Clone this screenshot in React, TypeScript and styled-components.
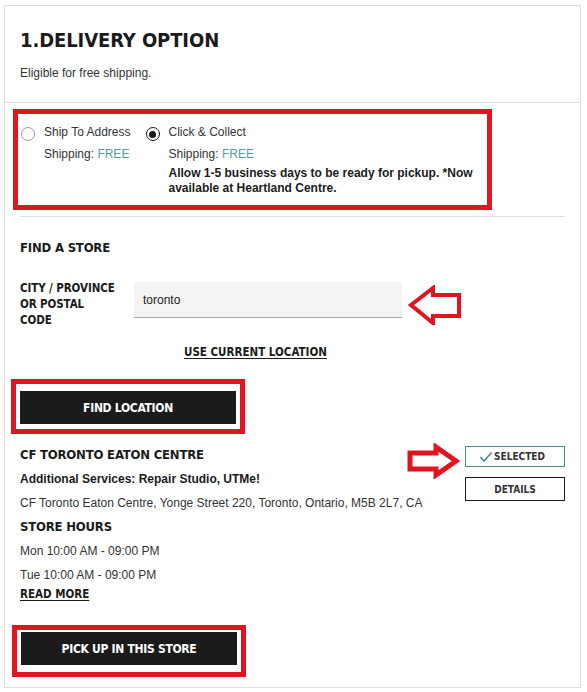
import styled, { createGlobalStyle } from "styled-components";

const GlobalStyle = createGlobalStyle`
  body {
    margin: 0;
    background: #fff;
    font-family: "Liberation Sans", Arial, sans-serif;
    color: #1b1b1b;
  }
`;

const COND = `"DejaVu Sans Condensed", "Liberation Sans Narrow", Roboto, sans-serif`;
const RED = "#e1141f";
const TEAL = "#5a9aa2";

const Card = styled.div`
  box-sizing: border-box;
  width: 577px;
  margin: 5px 0 0 4px;
  border: 1px solid #dedede;
`;

const Header = styled.div`
  padding: 22px 15px 21px;
  border-bottom: 1px solid #dedede;
`;

const Title = styled.h1`
  margin: 0;
  font-family: ${COND};
  font-size: 20px;
  line-height: 24px;
  font-weight: 700;
  letter-spacing: -0.1px;
  color: #1b1b1b;
`;

const Note = styled.p`
  margin: 13px 0 0;
  font-size: 12px;
  line-height: 16px;
  color: #333;
`;

const Body = styled.div`
  padding: 6px 15px 10px;
`;

const Highlight = styled.div<{ $shift: number; $pad: string; $width?: number }>`
  box-sizing: border-box;
  border: 5px solid ${RED};
  margin-left: -${(p) => p.$shift}px;
  padding: ${(p) => p.$pad};
  width: ${(p) => (p.$width ? `${p.$width}px` : "auto")};
`;

const Options = styled.div`
  display: flex;
  gap: 15px;
`;

const Option = styled.label`
  display: grid;
  grid-template-columns: 14px auto;
  column-gap: 9px;
  align-items: start;
  flex: none;
`;

const Radio = styled.span<{ $checked?: boolean }>`
  box-sizing: border-box;
  width: 14px;
  height: 14px;
  margin-top: 3px;
  border-radius: 50%;
  border: ${(p) => (p.$checked ? "1.5px solid #1b1b1b" : "1px solid #9a9a9a")};
  display: flex;
  align-items: center;
  justify-content: center;
  &::after {
    content: "";
    display: ${(p) => (p.$checked ? "block" : "none")};
    width: 7px;
    height: 7px;
    border-radius: 50%;
    background: #1b1b1b;
  }
`;

const OptionText = styled.div`
  font-size: 12px;
  color: #333;
`;

const OptionName = styled.div`
  line-height: 16px;
  white-space: nowrap;
`;

const Shipping = styled.div`
  margin-top: 6px;
  line-height: 16px;
  white-space: nowrap;
  span {
    color: ${TEAL};
  }
`;

const Allow = styled.p`
  margin: 4px 0 0;
  width: 318px;
  line-height: 15px;
  font-weight: 700;
  color: #1b1b1b;
`;

const Divider = styled.hr`
  margin: 6px 0 0;
  border: 0;
  border-top: 1px solid #dedede;
`;

const SectionTitle = styled.h2`
  margin: 22px 0 0;
  font-family: ${COND};
  font-size: 13px;
  line-height: 18px;
  font-weight: 700;
  letter-spacing: -0.2px;
`;

const FormRow = styled.div`
  margin-top: 23px;
  display: flex;
  align-items: flex-start;
`;

const FieldLabel = styled.label`
  width: 114px;
  white-space: nowrap;
  font-family: ${COND};
  font-size: 11.5px;
  line-height: 16px;
  font-weight: 700;
  letter-spacing: -0.1px;
`;

const Input = styled.input`
  box-sizing: border-box;
  width: 268px;
  height: 36px;
  margin-top: 2px;
  padding: 0 9px;
  border: 0;
  border-bottom: 1px solid #a9a9a9;
  background: #f4f4f4;
  font-family: "Liberation Sans", Arial, sans-serif;
  font-size: 12px;
  color: #1b1b1b;
  outline: none;
`;

const ArrowLeft = styled.svg`
  margin: 5px 0 0 6px;
`;

const LinkRow = styled.div`
  margin-top: 15px;
  padding-left: 164px;
  line-height: 16px;
`;

const TextLink = styled.a`
  font-family: ${COND};
  font-size: 11.5px;
  line-height: 16px;
  font-weight: 700;
  color: #1b1b1b;
  text-decoration: underline;
  text-underline-offset: 2px;
`;

const BlackButton = styled.button`
  display: block;
  width: 216px;
  height: 33px;
  border: 0;
  background: #1b1b1b;
  color: #fff;
  font-family: ${COND};
  font-size: 12px;
  font-weight: 700;
  letter-spacing: -0.3px;
  cursor: pointer;
`;

const StoreRow = styled.div`
  margin-top: 9px;
  display: flex;
  justify-content: space-between;
`;

const StoreInfo = styled.div`
  font-size: 12px;
  line-height: 24px;
  color: #333;
`;

const StoreHeading = styled.div`
  font-family: ${COND};
  font-size: 13px;
  font-weight: 700;
  letter-spacing: -0.2px;
  color: #1b1b1b;
`;

const Services = styled.div`
  font-weight: 700;
  color: #1b1b1b;
`;

const ReadMore = styled.div`
  margin-top: -1px;
  line-height: 16px;
`;

const StoreActions = styled.div`
  position: relative;
  display: flex;
  flex-direction: column;
  gap: 10px;
  padding-top: 3px;
`;

const ArrowRight = styled.svg`
  position: absolute;
  left: -59px;
  top: 0;
`;

const OutlineButton = styled.button<{ $selected?: boolean }>`
  box-sizing: border-box;
  width: 100px;
  height: ${(p) => (p.$selected ? 21 : 24)}px;
  display: flex;
  align-items: center;
  justify-content: center;
  gap: 1px;
  padding: 0;
  background: #fff;
  border: 1px solid ${(p) => (p.$selected ? "#4e8a90" : "#1b1b1b")};
  font-family: ${COND};
  font-size: 10px;
  font-weight: 700;
  color: #333;
  cursor: pointer;
  svg {
    margin-left: -6px;
  }
`;

export default function App() {
  return (
    <>
      <GlobalStyle />
      <Card>
        <Header>
          <Title>1.DELIVERY OPTION</Title>
          <Note>Eligible for free shipping.</Note>
        </Header>
        <Body>
          <Highlight $shift={7} $width={479} $pad="10px 4px 9px 3px">
            <Options>
              <Option>
                <Radio />
                <OptionText>
                  <OptionName>Ship To Address</OptionName>
                  <Shipping>
                    Shipping: <span>FREE</span>
                  </Shipping>
                </OptionText>
              </Option>
              <Option>
                <Radio $checked />
                <OptionText>
                  <OptionName>Click &amp; Collect</OptionName>
                  <Shipping>
                    Shipping: <span>FREE</span>
                  </Shipping>
                  <Allow>
                    Allow 1-5 business days to be ready for pickup. *Now available at Heartland Centre.
                  </Allow>
                </OptionText>
              </Option>
            </Options>
          </Highlight>
          <Divider />
          <SectionTitle>FIND A STORE</SectionTitle>
          <FormRow>
            <FieldLabel htmlFor="store-search">
              CITY / PROVINCE
              <br />
              OR POSTAL
              <br />
              CODE
            </FieldLabel>
            <Input id="store-search" defaultValue="toronto" />
            <ArrowLeft width="54" height="40" viewBox="0 0 54 40">
              <polygon
                points="3,20 25,3 25,10 51,10 51,31 25,31 25,38"
                fill="#fff"
                stroke={RED}
                strokeWidth="4"
              />
            </ArrowLeft>
          </FormRow>
          <LinkRow>
            <TextLink href="#">USE CURRENT LOCATION</TextLink>
          </LinkRow>
          <Highlight $shift={9} $width={234} $pad="7px 4px 5px" style={{ marginTop: 19 }}>
            <BlackButton>FIND LOCATION</BlackButton>
          </Highlight>
          <StoreRow>
            <StoreInfo>
              <StoreHeading>CF TORONTO EATON CENTRE</StoreHeading>
              <Services>Additional Services: Repair Studio, UTMe!</Services>
              <div>CF Toronto Eaton Centre, Yonge Street 220, Toronto, Ontario, M5B 2L7, CA</div>
              <StoreHeading>STORE HOURS</StoreHeading>
              <div>Mon 10:00 AM - 09:00 PM</div>
              <div>Tue 10:00 AM - 09:00 PM</div>
              <ReadMore>
                <TextLink href="#">READ MORE</TextLink>
              </ReadMore>
            </StoreInfo>
            <StoreActions>
              <ArrowRight width="54" height="36" viewBox="0 0 54 36">
                <polygon
                  points="4,10 30,10 30,4 50,18 30,32 30,26 4,26"
                  fill="#fff"
                  stroke={RED}
                  strokeWidth="5"
                />
              </ArrowRight>
              <OutlineButton $selected>
                <svg width="14" height="12" viewBox="0 0 14 12">
                  <polyline points="1.5,6 5,10 12.5,1.5" fill="none" stroke="#4e8a90" strokeWidth="1.6" />
                </svg>
                SELECTED
              </OutlineButton>
              <OutlineButton>DETAILS</OutlineButton>
            </StoreActions>
          </StoreRow>
          <Highlight $shift={8} $width={234} $pad="2px 4px 7px" style={{ marginTop: 23 }}>
            <BlackButton>PICK UP IN THIS STORE</BlackButton>
          </Highlight>
        </Body>
      </Card>
    </>
  );
}
